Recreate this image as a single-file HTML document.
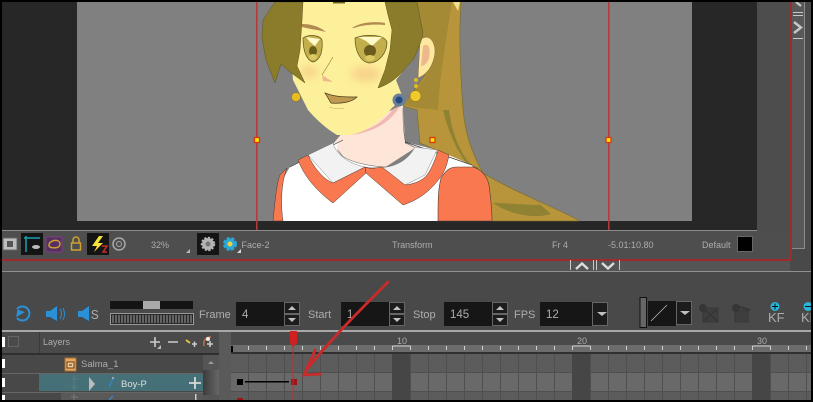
<!DOCTYPE html>
<html><head><meta charset="utf-8"><style>
html,body{margin:0;padding:0;background:#000;width:813px;height:402px;overflow:hidden}
svg{display:block}
text{font-family:"Liberation Sans",sans-serif;fill:#adadad}
</style></head><body>
<svg width="813" height="402" viewBox="0 0 813 402" xmlns="http://www.w3.org/2000/svg">
<defs>
<filter id="b" x="-50%" y="-50%" width="200%" height="200%"><feGaussianBlur stdDeviation="4"/></filter>
<linearGradient id="sb" x1="0" x2="1" y1="0" y2="0"><stop offset="0" stop-color="#3c3c3c"/><stop offset="1" stop-color="#666"/></linearGradient>
</defs>
<rect width="813" height="402" fill="#494949"/>
<!-- top viewport -->
<rect x="2" y="2" width="755" height="229" fill="#272727"/>
<rect x="757" y="2" width="33" height="229" fill="#4d4d4d"/>
<rect x="77" y="2" width="615" height="219" fill="#808080"/>
<!-- ponytail -->
<path d="M417 2H461C459 30 460 70 463 110C465 130 470 150 483 173C510 190 550 205 580 221H490L478 168L420 143L417 110L403 106L425 75Z" fill="#b8953a" stroke="#7a6c28" stroke-width=".6"/>
<path d="M417 2H452C448 30 440 70 438 110L417 108L403 105L425 78L423 40Z" fill="#a58a36"/>
<path d="M453 2H460L458 11Z" fill="#f0e28a"/>
<path d="M443 110H449C452 135 462 160 482 176C466 170 450 140 443 110Z" fill="#8f8232"/>
<path d="M493 203C510 203 525 205 540 205L534 199L551 214C535 219 510 215 493 203Z" fill="#8f8232"/>
<!-- neck -->
<path d="M343 132L403 105L405 143L415 148L384 168L350 164L333 144Z" fill="#fde6d8"/>
<path d="M345 135C368 132 384 122 393 109L400 106C390 124 368 135 345 135Z" fill="#f2b8b0"/>
<path d="M403 108C403 120 403 132 406 144" fill="none" stroke="#555" stroke-width=".5"/>
<!-- body -->
<path d="M275 221C278 195 282 178 290 167L343 140C328 146 340 164 383 167C400 167 420 158 415 147L405 142L437 150L472 165L492 221Z" fill="#fff"/>
<path d="M290 167L343 140M405 142L472 165" fill="none" stroke="#3a3a3a" stroke-width=".7"/>
<path d="M333 143C335 155 350 164 383 167C400 167 418 158 415 147" fill="none" stroke="#555" stroke-width=".5"/>
<!-- white collars -->
<path d="M308 155L333 143C336 155 350 164 365 167L333 183Z" fill="#f2f2f2" stroke="#666" stroke-width=".4"/>
<path d="M365 167C385 170 405 166 415 147L437 150L425 175L405 185Z" fill="#f2f2f2" stroke="#666" stroke-width=".4"/>
<!-- coral collars -->
<path d="M298 160L308 155C315 170 325 180 333 183L365 167L366 173L333 203C318 192 305 178 298 160Z" fill="#f97850" stroke="#4a3a30" stroke-width=".5"/>
<path d="M365 167C372 170 378 167 382 167L405 185C415 184 423 180 427 175C432 168 436 158 438 150L449 155C447 165 445 170 442 175C430 192 418 200 403 205L366 173Z" fill="#f97850" stroke="#4a3a30" stroke-width=".5"/>
<!-- sleeves -->
<path d="M438 221C438 200 438 190 441 178C446 170 450 167 457 167H473C482 170 487 176 489 185C491 200 492 210 492 221Z" fill="#f97850" stroke="#4a3a30" stroke-width=".6"/>
<path d="M273 221C275 200 277 182 280 175L287 168C282 180 280 200 283 221Z" fill="#f97850" stroke="#4a3a30" stroke-width=".5"/>
<!-- ear -->
<path d="M420 40C428 33 435 40 435 52C434 64 428 74 418 78Z" fill="#fde8a0" stroke="#8a6a30" stroke-width=".5"/>
<path d="M423 46C429 42 431 50 429 58C427 64 424 66 421 66Z" fill="#eeb88e"/>
<!-- face -->
<path d="M298 2H392L410 40L408 65L396 80L403 98L392 108C378 124 365 132 350 135H337C325 128 315 118 308 110L293 80L290 40Z" fill="#fdf09a"/>
<ellipse cx="309" cy="72" rx="9" ry="6" fill="#f8d48c" filter="url(#b)"/>
<ellipse cx="366" cy="74" rx="15" ry="8" fill="#f8d48c" filter="url(#b)"/>
<!-- hair -->
<path d="M275 2L263 20L262 38L266 60L275 83L281 64L290 72L305 83L297 66L300 50L302 20L303 2Z" fill="#8a7c2a" stroke="#5e5420" stroke-width=".5"/>
<path d="M385 2L388 15L392 30L390 50L385 70L378 88C390 84 400 76 407 66L413 60C418 50 422 40 423 33L417 2Z" fill="#8a7c2a" stroke="#5e5420" stroke-width=".5"/>
<rect x="333" y="2" width="12" height="1.500" fill="#6e6226"/>
<!-- brows -->
<path d="M302 24C312 24 320 27 326 32C318 30 310 29 302 27Z" fill="#b08a50"/>
<path d="M352 28C360 22 376 21 385 23V25C372 24 362 25 354 28Z" fill="#b08a50"/>
<!-- eyes -->
<path d="M303 38C309 34 320 35 322 40C323 50 321 60 313 62C306 60 303 50 303 38Z" fill="#c2ae4a" stroke="#5e5420" stroke-width=".7"/>
<path d="M306 37L320 39L315 46L310 42Z" fill="#fff8c8"/>
<ellipse cx="313" cy="51" rx="4" ry="5" fill="#6a5c1c"/>
<ellipse cx="313" cy="57" rx="4" ry="3" fill="#dcc860"/>
<path d="M355 38C365 34 384 34 387 42C387 54 378 63 369 63C361 62 355 52 355 38Z" fill="#c2ae4a" stroke="#5e5420" stroke-width=".7"/>
<path d="M358 37H382L372 46L366 41Z" fill="#fff8c8"/>
<ellipse cx="370" cy="51" rx="6" ry="6" fill="#6a5c1c"/>
<ellipse cx="370" cy="58" rx="5" ry="3" fill="#dcc860"/>
<!-- nose & mouth -->
<path d="M333 57L322 75" fill="none" stroke="#9a7040" stroke-width=".6"/>
<path d="M322 75L333 82L323 81Z" fill="#eeb88e"/>
<path d="M325 93C335 97 345 97 357 97C352 102 342 104 331 103Z" fill="#c09a50" stroke="#4a3a18" stroke-width=".7"/>
<path d="M329 107C335 109 340 109 344 108" fill="none" stroke="#b8a860" stroke-width=".5"/>
<!-- earrings -->
<circle cx="296" cy="97" r="4.500" fill="#e6bd25" stroke="#8a6a10" stroke-width=".5"/>
<circle cx="415.500" cy="96" r="5.500" fill="#f0ca2c" stroke="#8a6a10" stroke-width=".5"/>
<circle cx="416" cy="86" r="2" fill="#e0b820"/><circle cx="416" cy="80" r="2" fill="#e0b820"/>
<circle cx="399" cy="100" r="6.500" fill="#6a7f99"/><circle cx="399" cy="100" r="3.500" fill="#254a80"/>
<!-- transform box -->
<rect x="256" y="2" width="1.500" height="229" fill="#b23a3a"/>
<rect x="608" y="2" width="1.500" height="229" fill="#b23a3a"/>
<g fill="#ffe600" stroke="#d83a10" stroke-width="1.300">
<rect x="254.500" y="137.500" width="5" height="5"/><rect x="430" y="137.500" width="5" height="5"/><rect x="606" y="137.500" width="5" height="5"/>
</g>
<!-- status bar -->
<rect x="2" y="230" width="755" height="1" fill="#8c8c8c"/>
<rect x="2" y="231" width="789" height="28" fill="#4e4e4e"/>
<rect x="2" y="259" width="790" height="2" fill="#9e2a2e"/>
<rect x="790" y="2" width="2" height="259" fill="#9e2a2e"/>
<rect x="792" y="2" width="12" height="246" fill="#585858"/>
<rect x="792" y="248" width="12" height="1" fill="#8c8c8c"/>
<rect x="804" y="2" width="1" height="247" fill="#8c8c8c"/>
<path d="M796 2L801 6" fill="none" stroke="#c8c8c8" stroke-width="2.200"/>
<path d="M793 12.500H803M793 15.500H803M793 38.500H803" fill="none" stroke="#c8c8c8"/>
<path d="M794 22L801 27.500L794 33" fill="none" stroke="#c8c8c8" stroke-width="2.400"/>
<rect x="2" y="261" width="788" height="10" fill="#555"/>
<rect x="2" y="271" width="811" height="1" fill="#909090"/>
<!-- status icons -->
<rect x="3" y="238" width="14" height="12" fill="#bdbdbd" stroke="#666"/><rect x="7" y="241" width="6" height="6" fill="#555"/>
<rect x="21" y="233" width="22" height="22" fill="#141414"/>
<path d="M26 236V252M24 238H40" stroke="#19a0b0" stroke-width="1.500" fill="none"/>
<ellipse cx="36" cy="247" rx="4" ry="2" fill="#bbb"/>
<rect x="46" y="237" width="16" height="15" fill="#55315f" stroke="#7e3a8a"/>
<path d="M49 246C48 240 60 238 60 244C60 249 52 248 50 247Z" fill="none" stroke="#d8a030" stroke-width="1.400"/>
<rect x="71.500" y="243" width="9" height="7" fill="none" stroke="#d0a030" stroke-width="1.500"/>
<path d="M73 243V240C73 236 79 236 79 240V243" fill="none" stroke="#d0a030" stroke-width="1.500"/>
<rect x="87" y="233" width="22" height="22" fill="#141414"/>
<path d="M99 236L92 246H97L94 252L103 243H98L103 236Z" fill="#f6e23a"/>
<path d="M102 246H107L103 252H107" fill="none" stroke="#c03030" stroke-width="1.500"/>
<circle cx="119" cy="244" r="6" fill="none" stroke="#a8a8a8" stroke-width="1.500"/><circle cx="119" cy="244" r="2.500" fill="none" stroke="#a8a8a8"/>
<text x="151" y="248" font-size="9">32%</text>
<path d="M190 249V253H186Z" fill="#bbb"/>
<rect x="197" y="233" width="22" height="22" fill="#141414"/>
<circle cx="208" cy="244" r="6" fill="#b5b5b5" stroke="#b5b5b5" stroke-width="2.500" stroke-dasharray="2 1.500"/><circle cx="208" cy="244" r="2.500" fill="#777"/>
<circle cx="230" cy="244" r="5.500" fill="#2aa9d8" stroke="#2aa9d8" stroke-width="3" stroke-dasharray="3 1.500"/><circle cx="230" cy="244" r="2.500" fill="#f0d040"/>
<path d="M241 249V253H237Z" fill="#ddd"/>
<text x="241.500" y="248" font-size="9">Face-2</text>
<text x="392" y="248" font-size="9">Transform</text>
<text x="552" y="248" font-size="9">Fr 4</text>
<text x="608" y="248" font-size="9">-5.01:10.80</text>
<text x="702" y="248" font-size="9">Default</text>
<rect x="737.500" y="236.500" width="15" height="15" fill="#000" stroke="#666"/>
<!-- collapse -->
<path d="M570.500 260V270M593.500 260V270M596.500 260V270M619.500 260V270" stroke="#ccc" fill="none"/>
<path d="M576 269L582 263.500L588 269M602 263L608 268.500L614 263" fill="none" stroke="#ddd" stroke-width="2.400"/>
<!-- playback -->
<path d="M17 309A7 7 0 1 1 17 318" fill="none" stroke="#2a90d8" stroke-width="2"/>
<path d="M16 312L22 307V317Z" fill="#2a90d8" transform="rotate(60 19 312)"/>
<path d="M46 311H50L57 306V321L50 317H46Z" fill="#2a90d8"/><path d="M60 309C62 312 62 316 60 319M63 308C65 312 65 316 63 320" fill="none" stroke="#2a90d8"/>
<path d="M78 311H82L89 306V321L82 317H78Z" fill="#2a90d8"/>
<text x="91" y="319" font-size="13" transform="translate(9 0) scale(.9 1)">S</text>
<rect x="110" y="301" width="83" height="8" fill="#141414"/><rect x="143" y="301" width="17" height="8" fill="#aaa"/>
<rect x="110.500" y="313.500" width="83" height="11" fill="#2a2a2a" stroke="#999"/>
<path d="M113 315V323M116 315V323M119 315V323M122 315V323M125 315V323M128 315V323M131 315V323M134 315V323M137 315V323M140 315V323M143 315V323M146 315V323M149 315V323M152 315V323M155 315V323M158 315V323M161 315V323M164 315V323M167 315V323M170 315V323M173 315V323M176 315V323M179 315V323M182 315V323M185 315V323M188 315V323M191 315V323" stroke="#888" stroke-width="1.200"/>
<text x="199" y="318" font-size="11">Frame</text>
<rect x="236" y="302" width="48" height="24" fill="#161616"/>
<text x="242" y="318" font-size="11.500">4</text>
<text x="308" y="318" font-size="11">Start</text>
<rect x="341" y="302" width="48" height="24" fill="#161616"/>
<text x="347" y="318" font-size="11.500">1</text>
<text x="413" y="318" font-size="11">Stop</text>
<rect x="444" y="302" width="48" height="24" fill="#161616"/>
<text x="450" y="318" font-size="11.500">145</text>
<text x="514" y="318" font-size="11">FPS</text>
<rect x="540" y="302" width="52" height="24" fill="#161616"/>
<text x="546" y="318" font-size="11.500">12</text>
<!-- spinners -->
<g fill="#1c1c1c" stroke="#666">
<rect x="284.500" y="302.500" width="15" height="11"/><rect x="284.500" y="314.500" width="15" height="11"/>
<rect x="389.500" y="302.500" width="15" height="11"/><rect x="389.500" y="314.500" width="15" height="11"/>
<rect x="492.500" y="302.500" width="15" height="11"/><rect x="492.500" y="314.500" width="15" height="11"/>
<rect x="592.500" y="302.500" width="15" height="23"/>
<rect x="676.500" y="301.500" width="15" height="23"/>
</g>
<g fill="#c0c0c0">
<path d="M288 310L292 306L296 310ZM288 318L292 322L296 318Z"/>
<path d="M393 310L397 306L401 310ZM393 318L397 322L401 318Z"/>
<path d="M496 310L500 306L504 310ZM496 318L500 322L504 318Z"/>
<path d="M597 312H607L602 316Z"/>
<path d="M680 311H690L685 315Z"/>
</g>
<rect x="640" y="297.500" width="6.500" height="30" fill="#666" stroke="#111"/>
<rect x="648" y="301" width="28" height="25" fill="#161616"/>
<path d="M651 321L667 305" stroke="#bbb" stroke-width=".8"/>
<!-- KF icons -->
<rect x="703" y="308" width="15" height="14" fill="#3e3e3e" stroke="#383838"/><path d="M704 309L717 321M717 309L704 321" stroke="#333"/>
<circle cx="703" cy="308" r="4" fill="#363636"/>
<rect x="735" y="310" width="13" height="12" fill="#3e3e3e" stroke="#383838"/><path d="M734 305L750 310" stroke="#383838" stroke-width="2"/>
<circle cx="736" cy="308" r="4" fill="#363636"/>
<circle cx="775" cy="306.500" r="4.500" fill="#29b5d8"/><path d="M772 306.500H778M775 303.500V309.500" stroke="#111"/>
<text x="768" y="322" font-size="13">KF</text>
<circle cx="808" cy="306.500" r="4.500" fill="#29b5d8"/><path d="M805 306.500H811" stroke="#111"/>
<text x="801" y="322" font-size="13">KF</text>
<rect x="0" y="330" width="813" height="2" fill="#a8a8a8"/>
<!-- layers header -->
<rect x="2" y="332" width="217" height="21" fill="#4a4a4a"/>
<rect x="39" y="332" width="1" height="21" fill="#3a3a3a"/>
<rect x="2" y="353" width="217" height="2" fill="#2f2f2f"/>
<rect x="8.500" y="336.500" width="10" height="10" fill="#4a4a4a" stroke="#646464"/>
<text x="43" y="345" font-size="9">Layers</text>
<path d="M150 342H160M155 337V347M168 342H178" stroke="#ccc" stroke-width="1.600"/>
<path d="M161 345V349H157Z" fill="#bbb"/>
<path d="M186 340L190 343" stroke="#e8c040" stroke-width="2"/><path d="M192 344H197M194.500 341.500V347" stroke="#ccc" stroke-width="1.500"/>
<path d="M204 346C203 340 206 337 211 337" fill="none" stroke="#c07040" stroke-width="1.500"/>
<circle cx="208" cy="339" r="2" fill="#eee"/><path d="M207 344H213M210 341V347" stroke="#ccc" stroke-width="1.500"/>
<!-- layer rows -->
<rect x="2" y="355" width="201" height="18" fill="#484848"/>
<rect x="2" y="373" width="201" height="1" fill="#666"/>
<rect x="2" y="374" width="37" height="18" fill="#484848"/>
<rect x="39" y="374" width="164" height="17" fill="#457078"/>
<rect x="39" y="391" width="164" height="1" fill="#484848"/>
<rect x="2" y="392" width="201" height="1" fill="#666"/>
<rect x="2" y="393" width="59" height="7" fill="#484848"/>
<rect x="61" y="393" width="142" height="7" fill="#595959"/>
<rect x="65" y="358" width="11" height="13" fill="#e8a860" stroke="#a87030"/><rect x="67" y="362" width="7" height="6" fill="#f0c890" stroke="#60401c"/>
<path d="M69 365H72" stroke="#333"/>
<text x="81" y="367" font-size="9.500">Salma_1</text>
<path d="M89 377L95 384L89 391Z" fill="#bbb"/>
<path d="M109 387L113 379" stroke="#3a80c0" stroke-width="1.500"/>
<circle cx="113" cy="378" r="1" fill="#bbb"/>
<text x="121" y="387" font-size="9.500" style="fill:#ddd">Boy-P</text>
<path d="M189 383H201M195 377V389" stroke="#d8d8d8" stroke-width="1.800"/>
<path d="M109 400L113 396" stroke="#3a80c0" stroke-width="1.500"/>
<path d="M74 375V391M71 379H78M71 387H78" stroke="#5c7c82"/>
<path d="M74 394V400M71 397H78" stroke="#777"/>
<rect x="195" y="394" width="1.500" height="6" fill="#ccc"/>
<!-- left markers -->
<rect x="2" y="337" width="3" height="10" fill="#fff"/><rect x="2" y="359" width="3" height="9" fill="#fff"/><rect x="2" y="378" width="3" height="9" fill="#fff"/><rect x="2" y="395" width="3" height="5" fill="#fff"/>
<!-- scrollbar -->
<rect x="203" y="355" width="16" height="15" fill="#555"/>
<rect x="203" y="370" width="16" height="25" fill="url(#sb)"/>
<rect x="203" y="395" width="16" height="7" fill="#555"/>
<path d="M208 364L211 361L214 364Z" fill="#999"/>
<rect x="219" y="332" width="12" height="70" fill="#5a5a5a"/>
<!-- timeline -->
<rect x="231" y="332" width="582" height="20" fill="#4a4a4a"/>
<rect x="231" y="345" width="582" height="7" fill="#6c6c6c"/>
<rect x="231" y="346" width="2" height="6" fill="#000"/>
<rect x="231" y="352" width="582" height="2" fill="#303030"/>
<rect x="231" y="354" width="582" height="48" fill="#5c5c5c"/>
<rect x="231" y="372" width="582" height="20" fill="#696969"/>
<g stroke="#4f4f4f" stroke-width="1">
<path d="M231 372.500H813M231 391.500H813"/>
<path d="M248.500 354V402M266.500 354V402M284.500 354V402M302.500 354V402M320.500 354V402M338.500 354V402M356.500 354V402M374.500 354V402M410.500 354V402M428.500 354V402M446.500 354V402M464.500 354V402M482.500 354V402M500.500 354V402M518.500 354V402M536.500 354V402M554.500 354V402M590.500 354V402M608.500 354V402M626.500 354V402M644.500 354V402M662.500 354V402M680.500 354V402M698.500 354V402M716.500 354V402M734.500 354V402M770.500 354V402M788.500 354V402M806.500 354V402"/>
</g>
<rect x="392" y="354" width="18" height="48" fill="#464646"/>
<rect x="572" y="354" width="18" height="48" fill="#464646"/>
<rect x="752" y="354" width="18" height="48" fill="#464646"/>
<g stroke="#d0d0d0" stroke-width="1">
<path d="M248.500 346V350M266.500 346V350M284.500 346V350M302.500 346V350M320.500 346V350M338.500 346V350M356.500 346V350M374.500 346V350M392.500 346V350M410.500 346V350M428.500 346V350M446.500 346V350M464.500 346V350M482.500 346V350M500.500 346V350M518.500 346V350M536.500 346V350M554.500 346V350M572.500 346V350M590.500 346V350M608.500 346V350M626.500 346V350M644.500 346V350M662.500 346V350M680.500 346V350M698.500 346V350M716.500 346V350M734.500 346V350M752.500 346V350M770.500 346V350M788.500 346V350M806.500 346V350"/>
<path d="M392.500 346H410.500M572.500 346H590.500M752.500 346H770.500"/>
</g>
<text x="397" y="344" font-size="9">10</text>
<text x="577" y="344" font-size="9">20</text>
<text x="757" y="344" font-size="9">30</text>
<!-- keyframes -->
<rect x="237" y="379" width="6" height="6" fill="#000"/>
<rect x="245" y="381" width="44" height="1.500" fill="#000"/>
<rect x="291" y="379" width="6" height="6" fill="#9b1418"/>
<rect x="237" y="398" width="6" height="2" fill="#9b1418"/>
<!-- playhead -->
<rect x="292.500" y="346" width="1" height="56" fill="#c03030"/>
<path d="M290 331H297V343L293.500 347L290 343Z" fill="#d02020"/>
<!-- arrow -->
<path d="M388 282C365 305 325 345 305 372" fill="none" stroke="#c92a2a" stroke-width="2.800" stroke-linecap="round"/>
<path d="M315 350C311 360 307 368 304 375L320 374" fill="none" stroke="#c92a2a" stroke-width="2.800" stroke-linecap="round"/>
<!-- black frame -->
<rect x="0" y="0" width="813" height="2" fill="#000"/>
<rect x="0" y="0" width="2" height="402" fill="#000"/>
<rect x="0" y="400" width="813" height="2" fill="#000"/>
<rect x="811" y="0" width="2" height="402" fill="#000"/>
</svg>
</body></html>
